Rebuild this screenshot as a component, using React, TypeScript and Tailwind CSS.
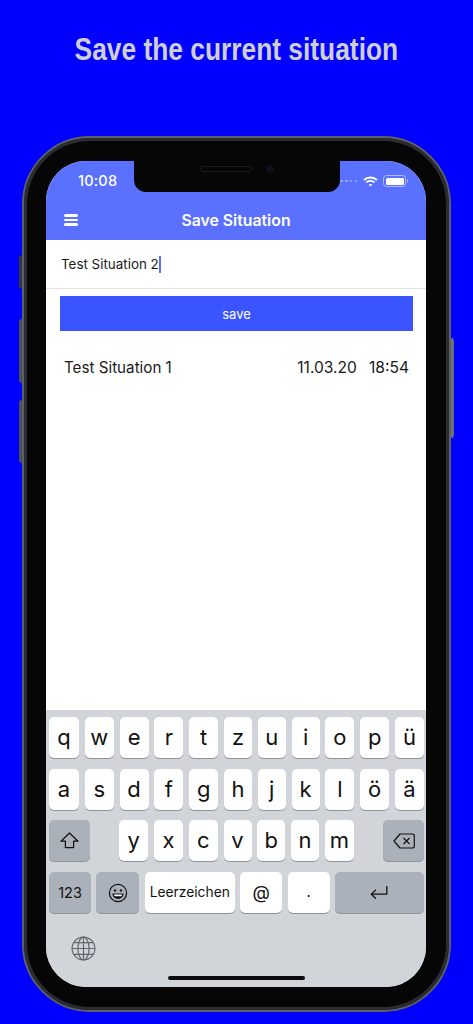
import React from 'react';

// key x positions were read off the screenshot
const rowOne = [
  ['q', 'w-[30px]'], ['w', 'w-[29px]'], ['e', 'w-[29px]'], ['r', 'w-[29px]'], ['t', 'w-[29px]'], ['z', 'w-[28px]'],
  ['u', 'w-[28px]'], ['i', 'w-[28px]'], ['o', 'w-[29px]'], ['p', 'w-[29px]'], ['ü', 'w-[29px]'],
];
const rowTwo = [
  ['a', 'w-[30px]'], ['s', 'w-[29px]'], ['d', 'w-[29px]'], ['f', 'w-[29px]'], ['g', 'w-[29px]'], ['h', 'w-[28px]'],
  ['j', 'w-[28px]'], ['k', 'w-[28px]'], ['l', 'w-[29px]'], ['ö', 'w-[29px]'], ['ä', 'w-[29px]'],
];
const rowThree = [
  ['y', 'w-[29px]'], ['x', 'w-[29px]'], ['c', 'w-[29px]'], ['v', 'w-[28px]'], ['b', 'w-[28px]'], ['n', 'w-[28px]'], ['m', 'w-[29px]'],
];

function Key({ label, width, dark, size }: { label?: React.ReactNode; width: string; dark?: boolean; size?: string }) {
  return (
    <div
      className={`flex h-[41px] shrink-0 items-center justify-center rounded-[5px] text-[#111] shadow-[0_1px_0_#8f949b] ${width} ${dark ? 'bg-[#abb1ba]' : 'bg-white'} ${size ?? 'text-[22px] font-normal'}`}
    >
      {label}
    </div>
  );
}

function Wifi() {
  return (
    <svg width="15" height="11" viewBox="0 0 15 11" fill="none" stroke="white" strokeWidth="1.9">
      <path d="M1 4 C4.6 .6 10.4 .6 14 4" />
      <path d="M3.4 6.4 C5.6 4.4 9.4 4.4 11.6 6.4" />
      <path d="M7.5 10.6 L5.6 8.6 C6.7 7.7 8.3 7.7 9.4 8.6 Z" fill="white" stroke="none" />
    </svg>
  );
}

function Battery() {
  return (
    <div className="flex items-center gap-px">
      <div className="flex h-[12px] w-[23px] items-center rounded-[3.5px] border border-white/50 p-[1.5px]">
        <div className="h-full w-full rounded-[1.5px] bg-white" />
      </div>
      <div className="h-[4px] w-px rounded-r bg-white/50" />
    </div>
  );
}

function Shift() {
  return (
    <svg width="19" height="17" viewBox="0 0 19 17" fill="none" stroke="#111" strokeWidth="1.2" strokeLinejoin="round">
      <path d="M9.5 1 L18 9.2 H13.6 V15.6 H5.4 V9.2 H1 Z" />
    </svg>
  );
}

function Backspace() {
  return (
    <svg width="22" height="16" viewBox="0 0 22 16" fill="none" stroke="#111" strokeWidth="1.2" strokeLinejoin="round">
      <path d="M7 1 H19.5 A1.8 1.8 0 0 1 21.3 2.8 V13.2 A1.8 1.8 0 0 1 19.5 15 H7 L1 8 Z" />
      <path d="M10.5 5 L16.5 11 M16.5 5 L10.5 11" />
    </svg>
  );
}

function Emoji() {
  return (
    <svg width="20" height="20" viewBox="0 0 20 20" fill="none" stroke="#111" strokeWidth="1.2">
      <circle cx="10" cy="10" r="8.6" />
      <circle cx="7" cy="7.4" r="1.2" fill="#111" stroke="none" />
      <circle cx="13" cy="7.4" r="1.2" fill="#111" stroke="none" />
      <path d="M4.4 10.6 H15.6 C15.4 14 13 15.9 10 15.9 C7 15.9 4.6 14 4.4 10.6 Z" fill="#111" stroke="none" />
      <path d="M5.9 11.5 H14.1 C14 12.4 13.7 12.9 13.3 13.3 H6.7 C6.3 12.9 6 12.4 5.9 11.5 Z" fill="#fff" stroke="none" />
    </svg>
  );
}

function ReturnArrow() {
  return (
    <svg width="18" height="15" viewBox="0 0 18 15" fill="none" stroke="#111" strokeWidth="1.3">
      <path d="M16.8 1 V9.2 H1.4" />
      <path d="M6 4.6 L1.4 9.2 L6 13.8" />
    </svg>
  );
}

function Globe() {
  return (
    <svg width="25" height="25" viewBox="0 0 25 25" fill="none" stroke="#62676d" strokeWidth="1.2">
      <circle cx="12.5" cy="12.5" r="11.4" />
      <ellipse cx="12.5" cy="12.5" rx="5.6" ry="11.4" />
      <path d="M12.5 1 V24 M1.1 12.5 H23.9 M2.8 6.6 H22.2 M2.8 18.4 H22.2" />
    </svg>
  );
}

export default function App() {
  return (
    <div className="flex h-[1024px] flex-col items-center overflow-hidden bg-[#0000ff] font-['Inter','Liberation_Sans',sans-serif]">
      {/* Page heading */}
      <h1 className="mt-[32px] h-[104px] scale-x-[0.85] whitespace-nowrap font-['Liberation_Sans',Arial,sans-serif] text-[31px] font-bold leading-[36px] text-[#cfcfcf]">
        Save the current situation
      </h1>

      {/* Phone */}
      <div className="relative h-[876px] w-[429px] shrink-0 rounded-[68px] border-2 border-[#5d6166] bg-[#060606] pl-[22px] pt-[23px] shadow-[inset_0_0_0_3px_#2a2c2f]">
        <div className="absolute -left-[5px] top-[117px] h-[34px] w-[3px] rounded-l bg-[#33363a]" />
        <div className="absolute -left-[5px] top-[181px] h-[64px] w-[3px] rounded-l bg-[#4c5056]" />
        <div className="absolute -left-[5px] top-[262px] h-[63px] w-[3px] rounded-l bg-[#4c5056]" />
        <div className="absolute -right-[5px] top-[200px] h-[100px] w-[3px] rounded-r bg-[#6d7075]" />

        {/* Screen */}
        <div className="relative flex h-[826px] w-[380px] flex-col overflow-hidden rounded-[40px] bg-white">
          {/* Notch */}
          <div className="absolute left-[88px] top-0 flex h-[31px] w-[206px] items-start justify-center gap-[14px] rounded-b-[12px] bg-[#060606] pt-[4px]">
            <div className="mt-[1px] h-[6px] w-[52px] rounded-full border border-[#1c1c1e]" />
            <div className="h-[8px] w-[8px] rounded-full bg-[#101018]" />
          </div>

          {/* Header */}
          <div className="flex h-[79px] shrink-0 flex-col bg-[#5a70ff] text-white">
            <div className="flex h-[37px] items-center justify-between pl-[32px] pr-[18px] pt-[3px]">
              <span className="text-[14.5px] font-medium leading-none tracking-[0.2px]">10:08</span>
              <div className="flex items-center gap-[5px]">
                <div className="mr-px flex gap-[2.2px]">
                  <div className="h-[2.5px] w-[2.5px] rounded-full bg-white/45" />
                  <div className="h-[2.5px] w-[2.5px] rounded-full bg-white/45" />
                  <div className="h-[2.5px] w-[2.5px] rounded-full bg-white/45" />
                  <div className="h-[2.5px] w-[2.5px] rounded-full bg-white/45" />
                </div>
                <Wifi />
                <Battery />
              </div>
            </div>
            <div className="relative flex flex-1 items-center justify-center pt-[4px]">
              <div className="absolute left-[18px] top-[16px] flex w-[14px] flex-col gap-[2px]">
                <div className="h-[2.5px] rounded-full bg-white" />
                <div className="h-[2.5px] rounded-full bg-white" />
                <div className="h-[2.5px] rounded-full bg-white" />
              </div>
              <span className="text-[15.8px] font-semibold">Save Situation</span>
            </div>
          </div>

          {/* Input */}
          <div className="flex h-[49px] shrink-0 items-center border-b border-[#e3e3e3] pl-[15px] text-[13.4px] text-[#1a1a1a]">
            <span>Test Situation 2</span>
            <div className="h-[17px] w-[2px] bg-[#5a70ff]" />
          </div>

          <div className="ml-[14px] mr-[13px] mt-[7px] flex h-[35px] shrink-0 items-center justify-center bg-[#3a55ff] pt-[2px] text-[13px] text-white">
            save
          </div>

          {/* Saved situations */}
          <div className="mt-[25px] flex shrink-0 items-center justify-between pl-[18px] pr-[17px] text-[15.2px] leading-[24px] text-[#1a1a1a]">
            <span>Test Situation 1</span>
            <div className="flex gap-[12px] text-[15.6px]">
              <span>11.03.20</span>
              <span>18:54</span>
            </div>
          </div>

          <div className="flex-1" />

          {/* Keyboard */}
          <div className="flex h-[277px] shrink-0 flex-col bg-[#d1d4d9] pl-[3px] pr-[2px] pt-[7px]">
            <div className="flex gap-[5.8px]">
              {rowOne.map(([k, w]) => (
                <Key key={k} label={k} width={w} />
              ))}
            </div>
            <div className="mt-[11px] flex gap-[5.8px]">
              {rowTwo.map(([k, w]) => (
                <Key key={k} label={k} width={w} />
              ))}
            </div>
            <div className="mt-[10px] flex items-center justify-between">
              <Key label={<Shift />} width="w-[41px]" dark />
              <div className="flex gap-[5.8px]">
                {rowThree.map(([k, w]) => (
                  <Key key={k} label={k} width={w} />
                ))}
              </div>
              <Key label={<Backspace />} width="w-[41px]" dark />
            </div>
            <div className="mt-[11px] flex justify-between">
              <Key label="123" width="w-[42px]" dark size="text-[14.5px]" />
              <Key label={<Emoji />} width="w-[43px]" dark />
              <Key label="Leerzeichen" width="w-[90px]" size="text-[13.8px]" />
              <Key label="@" width="w-[42px]" size="text-[18px]" />
              <Key label="." width="w-[42px]" size="text-[15px]" />
              <Key label={<ReturnArrow />} width="w-[89px]" dark />
            </div>
            <div className="relative flex-1">
              <div className="absolute left-[22px] top-[23px]">
                <Globe />
              </div>
              <div className="absolute bottom-[7px] left-[119px] h-[4px] w-[137px] rounded-full bg-[#0b0b0b]" />
            </div>
          </div>
        </div>
      </div>
    </div>
  );
}
